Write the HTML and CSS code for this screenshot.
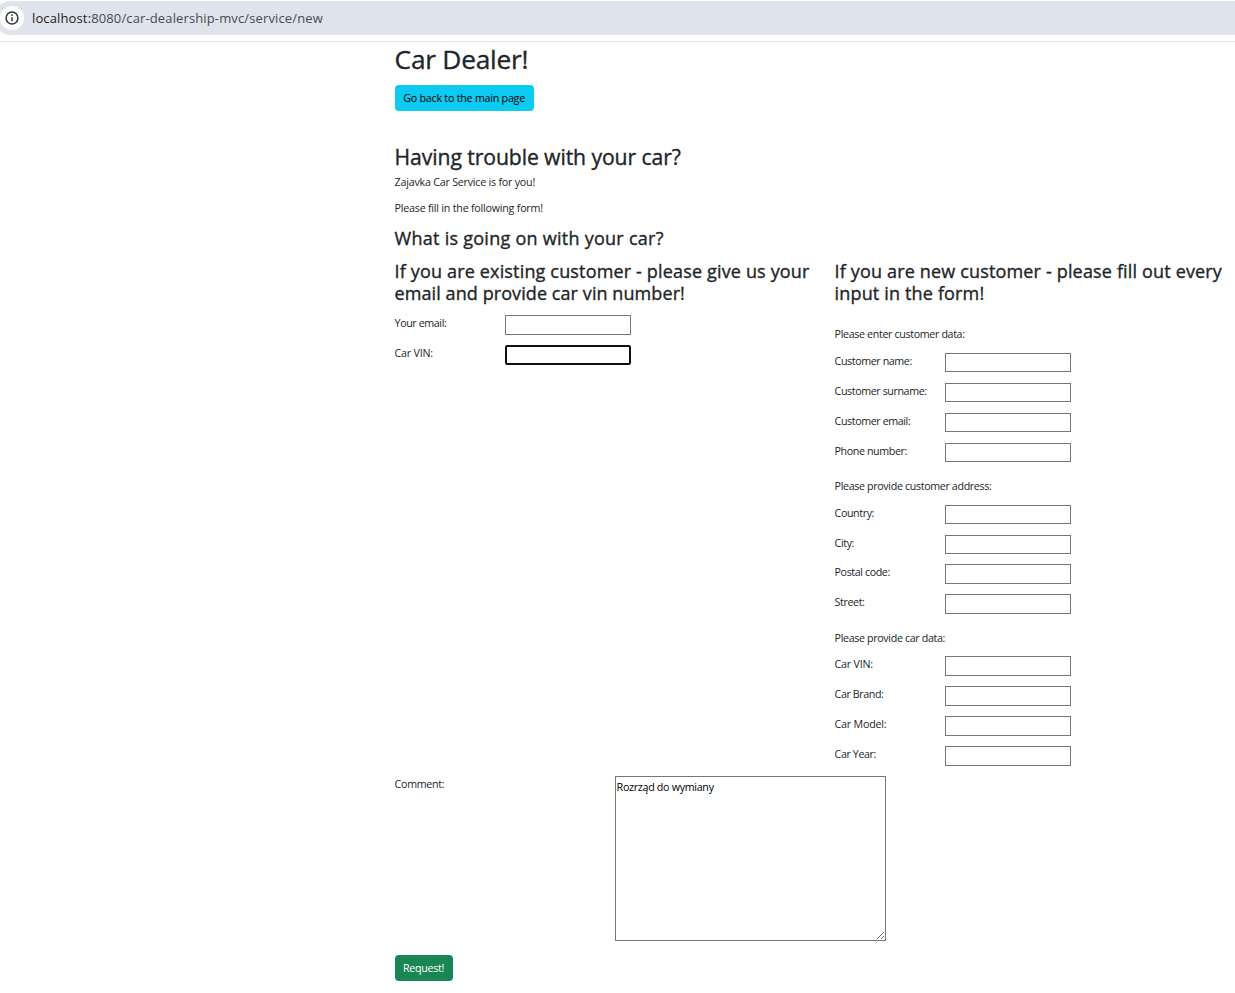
FILE: index.html
```html
<!DOCTYPE html>
<html lang="en">
<head>
<meta charset="utf-8">
<title>Car Dealer!</title>
<link rel="stylesheet" href="styles.css">
</head>
<body>
<header class="browser-bar">
  <div class="address">
    <span class="info"><svg width="14" height="14" viewBox="0 0 14 14" fill="none" stroke="#303134" stroke-width="1.5"><circle cx="7" cy="7" r="5.9"/><path d="M7 6.2v4M7 3.6v1.5"/></svg></span>
    <span class="url"><span class="host">localhost:</span>8080/car-dealership-mvc/service/new</span>
  </div>
</header>
<main class="page">
  <h1 class="title">Car Dealer!</h1>
  <button class="btn btn-info">Go back to the main page</button>
  <h2 class="subtitle">Having trouble with your car?</h2>
  <p class="lead">Zajavka Car Service is for you!</p>
  <p class="lead">Please fill in the following form!</p>
  <h3 class="heading question">What is going on with your car?</h3>
  <form class="form">
    <div class="columns">
      <section class="existing">
        <h3 class="heading">If you are existing customer - please give us your<br><span class="second-line">email and provide car vin number!</span></h3>
        <div class="fields">
          <label class="row"><span>Your email:</span><input class="input"></label>
          <label class="row"><span class="vin">Car VIN:</span><input class="input active"></label>
        </div>
      </section>
      <section class="new">
        <h3 class="heading">If you are new customer - please fill out every<br>input in the form!</h3>
        <p class="group-title first">Please enter customer data:</p>
        <div class="fields">
          <label class="row"><span>Customer name:</span><input class="input"></label>
          <label class="row"><span>Customer surname:</span><input class="input"></label>
          <label class="row"><span>Customer email:</span><input class="input"></label>
          <label class="row"><span>Phone number:</span><input class="input"></label>
        </div>
        <p class="group-title">Please provide customer address:</p>
        <div class="fields">
          <label class="row"><span>Country:</span><input class="input"></label>
          <label class="row"><span>City:</span><input class="input"></label>
          <label class="row"><span>Postal code:</span><input class="input tall"></label>
          <label class="row"><span>Street:</span><input class="input tall"></label>
        </div>
        <p class="group-title">Please provide car data:</p>
        <div class="fields">
          <label class="row"><span class="vin">Car VIN:</span><input class="input tall"></label>
          <label class="row"><span>Car Brand:</span><input class="input tall"></label>
          <label class="row"><span class="vin">Car Model:</span><input class="input tall"></label>
          <label class="row"><span>Car Year:</span><input class="input tall"></label>
        </div>
      </section>
    </div>
    <label class="comment"><span>Comment:</span><textarea class="textarea">Rozrząd do wymiany</textarea></label>
    <button class="btn btn-success" type="button">Request!</button>
  </form>
</main>
</body>
</html>
```
FILE: styles.css
```css
* { box-sizing: border-box; }
body {
  margin: 0;
  height: 993px;
  overflow: hidden;
  background: #fff;
  color: #212529;
  font: 10.7px/16px "Open Sans", "Noto Sans", sans-serif;
  letter-spacing: -0.3px;
}
h1, h2, h3, p { margin: 0; font-weight: 500; white-space: nowrap; }
h1, h2, h3 { -webkit-text-stroke: 0.35px #212529; }
p { font-weight: 400; }
.browser-bar { height: 42px; padding-top: 1px; border-bottom: 1px solid #dfe1e4; }
.address {
  display: flex;
  align-items: center;
  gap: 8px;
  height: 34px;
  margin-left: -6px;
  padding-left: 6px;
  border-radius: 17px 0 0 17px;
  background: #dfe4ec;
}
.info {
  display: grid;
  place-items: center;
  width: 24px;
  height: 24px;
  border-radius: 50%;
  background: #fff;
}
.url { color: #474a4f; font-size: 13px; letter-spacing: 0.13px; }
.host { color: #1f2023; }
.page { padding-left: 394.6px; }
.title { padding-bottom: 1px; font-size: 26.3px; line-height: 34px; letter-spacing: -0.25px; }
.btn {
  display: block;
  height: 26px;
  padding: 0 8px;
  border: 0;
  border-radius: 4px;
  font: inherit;
  letter-spacing: inherit;
  white-space: nowrap;
}
.btn-info { width: 139px; margin-top: 8px; background: #0dcaf0; color: #000; letter-spacing: -0.23px; }
.btn-success { width: 58px; margin-top: 14px; background: #198754; color: #fff; }
.subtitle { margin-top: 33px; font-size: 21.2px; line-height: 26px; letter-spacing: -0.1px; }
.lead { margin-top: 4px; margin-bottom: 10px; letter-spacing: -0.22px; }
.lead + .lead { margin-top: 0; }
.heading { font-size: 18px; line-height: 22px; letter-spacing: 0.16px; }
.question { margin-top: 11px; letter-spacing: 0.26px; }
.second-line { letter-spacing: 0.08px; }
.columns { display: grid; grid-template-columns: 440px 400px; height: 516px; margin-top: 11px; }
.existing .fields { padding-top: 11px; }
.row { display: grid; grid-template-columns: 110px 126px; align-items: start; height: 29.8px; letter-spacing: -0.4px; }
.vin { letter-spacing: -0.22px; }
.input {
  width: 126px;
  height: 19px;
  padding: 0 2px;
  border: 1px solid #767676;
  border-radius: 0;
  background: #fff;
  font: inherit;
  outline: none;
}
.input.tall { height: 20px; }
.existing .row { height: 30px; }
.existing .input { height: 20px; }
.active { border: 2px solid #101010; border-radius: 2px; }
.group-title { margin-top: 5.7px; margin-bottom: 10.7px; letter-spacing: -0.35px; }
.group-title.first { margin-top: 22.4px; margin-bottom: 10.9px; }
.comment { display: grid; grid-template-columns: 220px 271px; align-items: start; }
.textarea {
  width: 271px;
  height: 165px;
  padding: 2px 1px;
  border: 1px solid #767676;
  border-radius: 0;
  color: #000;
  font: inherit;
  letter-spacing: inherit;
  resize: both;
}
```
